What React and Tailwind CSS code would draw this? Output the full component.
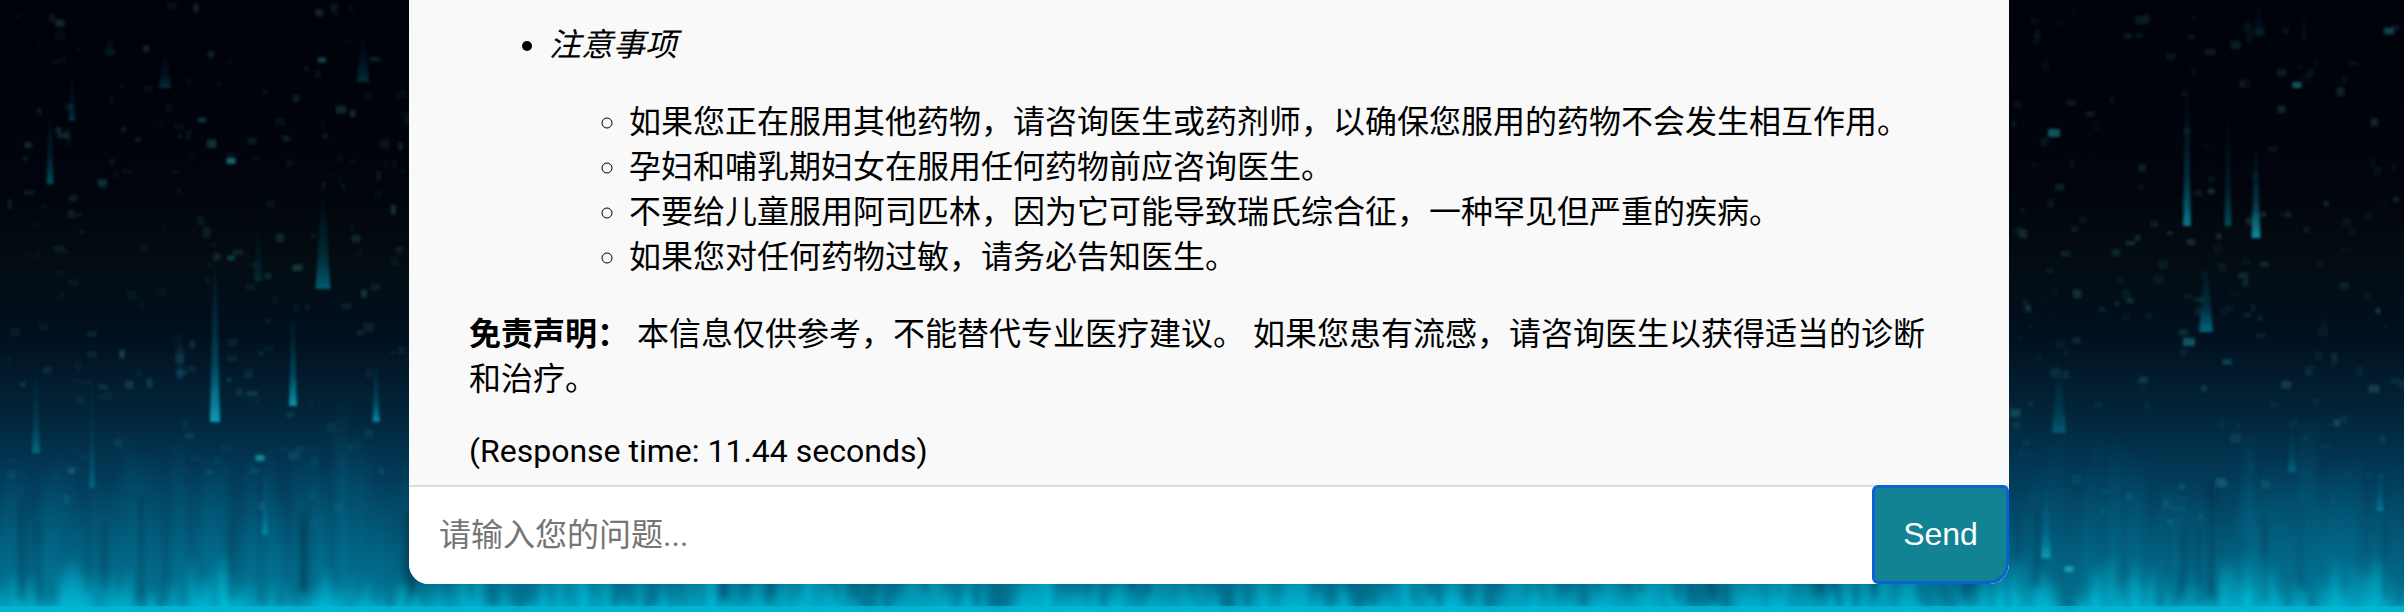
import React from 'react';

// seeded random so the rain looks the same on every render
function makeRandom(seed) {
  let s = seed;
  return () => {
    s = (s * 16807) % 2147483647;
    return (s - 1) / 2147483646;
  };
}

// x, top, bottom, width, opacity
const streaks = [
  [72, 70, 121, 6, 0.3],
  [50, 109, 184, 7, 0.45],
  [215, 254, 422, 10, 0.85],
  [293, 312, 406, 8, 0.8],
  [376, 359, 422, 7, 0.7],
  [323, 190, 289, 15, 0.5],
  [36, 371, 453, 8, 0.45],
  [92, 367, 488, 5, 0.35],
  [265, 457, 535, 6, 0.55],
  [363, 27, 82, 12, 0.25],
  [165, 50, 88, 12, 0.25],
  [110, 33, 55, 10, 0.2],
  [258, 219, 281, 8, 0.2],
  [180, 324, 379, 8, 0.2],
  [2187, 82, 226, 8, 0.65],
  [2228, 113, 226, 7, 0.4],
  [2256, 144, 238, 9, 0.8],
  [2206, 261, 332, 14, 0.55],
  [2059, 351, 433, 14, 0.35],
  [2046, 484, 558, 10, 0.7],
  [2292, 421, 472, 8, 0.35],
  [2380, 464, 511, 7, 0.45],
  [2259, 0, 35, 12, 0.15],
  [2304, 5, 40, 6, 0.12],
];

// x, y, size, opacity
const blobs = [
  [2054, 133, 12, 0.5],
  [2297, 85, 9, 0.5],
  [2389, 31, 10, 0.4],
  [2189, 342, 12, 0.45],
  [2069, 569, 9, 0.8],
  [2227, 362, 9, 0.3],
  [231, 161, 9, 0.6],
  [322, 60, 8, 0.4],
  [260, 458, 9, 0.7],
  [231, 258, 8, 0.3],
  [202, 120, 8, 0.3],
];

function RainBackground() {
  const random = makeRandom(4711);
  const columns = [];
  for (let x = -6; x < 2404; x += 9) {
    const wave = Math.sin(x / 31) * 18 + Math.sin(x / 11.3) * 12;
    columns.push({
      x,
      top: 505 - random() * 80 + wave,
      opacity: 0.2 + random() * 0.45,
    });
  }
  const peaks = [];
  for (let x = -6; x < 2404; x += 8) {
    peaks.push({
      x,
      top: 600 - random() * 42 + Math.sin(x / 19) * 14,
      opacity: 0.45 + random() * 0.55,
    });
  }
  const darks = [];
  for (let i = 0; i < 60; i++) {
    darks.push({
      x: Math.floor(random() * 400) * 6,
      top: 480 + random() * 60,
      bottom: 585 + random() * 18,
      opacity: 0.12 + random() * 0.3,
    });
  }
  const specks = [];
  for (let i = 0; i < 420; i++) {
    const left = random() < 0.52;
    specks.push({
      x: left ? random() * 409 : 2009 + random() * 395,
      y: random() * 520,
      w: 4 + random() * 7,
      h: 4 + random() * 6,
      opacity: 0.04 + random() * random() * 0.3,
    });
  }

  return (
    <svg
      className="absolute inset-0"
      width="2404"
      height="612"
      viewBox="0 0 2404 612"
      aria-hidden="true"
    >
      <defs>
        <linearGradient id="sky" x1="0" y1="0" x2="0" y2="1">
          <stop offset="0" stopColor="#00020a" />
          <stop offset="0.3" stopColor="#01040c" />
          <stop offset="0.42" stopColor="#030c11" />
          <stop offset="0.55" stopColor="#01101f" />
          <stop offset="0.68" stopColor="#02263a" />
          <stop offset="0.78" stopColor="#023a58" />
          <stop offset="0.88" stopColor="#03506f" />
          <stop offset="1" stopColor="#036c8a" />
        </linearGradient>
        <linearGradient id="glow" x1="0" y1="0" x2="0" y2="1">
          <stop offset="0" stopColor="#0a7ea0" stopOpacity="0" />
          <stop offset="1" stopColor="#0a86a6" stopOpacity="1" />
        </linearGradient>
        <linearGradient id="peak" x1="0" y1="0" x2="0" y2="1">
          <stop offset="0" stopColor="#00bcd8" stopOpacity="0" />
          <stop offset="0.7" stopColor="#00bcd8" stopOpacity="0.85" />
          <stop offset="1" stopColor="#00bcd8" stopOpacity="1" />
        </linearGradient>
        <linearGradient id="drop" x1="0" y1="0" x2="0" y2="1">
          <stop offset="0" stopColor="#0a7f9f" stopOpacity="0" />
          <stop offset="0.65" stopColor="#0a80a0" stopOpacity="0.5" />
          <stop offset="1" stopColor="#0cb0cc" stopOpacity="1" />
        </linearGradient>
        <filter id="soft" x="-5%" y="-5%" width="110%" height="110%">
          <feGaussianBlur stdDeviation="3" />
        </filter>
        <filter id="softer" x="-5%" y="-5%" width="110%" height="110%">
          <feGaussianBlur stdDeviation="1.6" />
        </filter>
      </defs>
      <rect width="2404" height="612" fill="url(#sky)" />
      <g filter="url(#soft)">
        {columns.map(c => (
          <rect
            key={c.x}
            x={c.x}
            y={c.top}
            width="11"
            height={620 - c.top}
            fill="url(#glow)"
            opacity={c.opacity}
          />
        ))}
        {peaks.map(c => (
          <rect
            key={c.x}
            x={c.x}
            y={c.top}
            width="11"
            height={620 - c.top}
            fill="url(#peak)"
            opacity={c.opacity}
          />
        ))}
        {darks.map((d, i) => (
          <rect
            key={i}
            x={d.x}
            y={d.top}
            width="6"
            height={d.bottom - d.top}
            fill="#012a40"
            opacity={d.opacity}
          />
        ))}
      </g>
      <g filter="url(#softer)">
        {specks.map((p, i) => (
          <rect
            key={i}
            x={p.x}
            y={p.y}
            width={p.w}
            height={p.h}
            fill="#3f9c9c"
            opacity={p.opacity}
          />
        ))}
        {blobs.map(([x, y, size, opacity], i) => (
          <rect
            key={i}
            x={x - size / 2}
            y={y - size / 3}
            width={size}
            height={(size * 2) / 3}
            fill="#23a6b4"
            opacity={opacity}
          />
        ))}
        {streaks.map(([x, top, bottom, width, opacity], i) => (
          <polygon
            key={i}
            points={`${x - 1},${top} ${x + 1},${top} ${x + width / 2},${bottom} ${x - width / 2},${bottom}`}
            fill="url(#drop)"
            opacity={opacity}
          />
        ))}
      </g>
      <rect y="606" width="2404" height="6" fill="#00b8d2" opacity="0.8" />
    </svg>
  );
}

const warnings = [
  '如果您正在服用其他药物，请咨询医生或药剂师，以确保您服用的药物不会发生相互作用。',
  '孕妇和哺乳期妇女在服用任何药物前应咨询医生。',
  '不要给儿童服用阿司匹林，因为它可能导致瑞氏综合征，一种罕见但严重的疾病。',
  '如果您对任何药物过敏，请务必告知医生。',
];

export default function App() {
  return (
    <div className="relative h-[612px] w-[2404px] overflow-hidden font-['Roboto','Noto_Sans_CJK_SC',sans-serif] text-[32px] leading-[45px] text-black">
      <RainBackground />
      <div className="relative ml-[409px] flex h-[584px] w-[1600px] flex-col overflow-hidden rounded-b-[20px] bg-white">
        <div className="flex h-[487px] flex-col border-b-2 border-[#dddddd] bg-[#f9f9f9] pl-[60px] pr-[60px] pt-[23px]">
          <ul className="list-disc pl-[80px]">
            <li>
              <em>注意事项</em>
              <ul className="mt-[32px] list-[circle] pl-[80px]">
                {warnings.map(item => (
                  <li key={item}>{item}</li>
                ))}
              </ul>
            </li>
          </ul>
          <p className="mt-[32px]">
            <strong>免责声明：</strong> 本信息仅供参考，不能替代专业医疗建议。 如果您患有流感，请咨询医生以获得适当的诊断和治疗。
          </p>
          <p className="mt-[27px]">(Response time: 11.44 seconds)</p>
        </div>
        <div className="flex flex-1">
          <input
            className="min-w-0 flex-1 bg-white pl-[30px] pr-4 outline-none placeholder:text-[#757575]"
            placeholder="请输入您的问题..."
          />
          <button className="relative -mt-[2px] w-[137px] rounded-[6px] rounded-br-[20px] border-[3px] border-[#0a62d2] bg-[#128393] font-['Liberation_Sans',sans-serif] text-white">
            Send
          </button>
        </div>
      </div>
    </div>
  );
}
